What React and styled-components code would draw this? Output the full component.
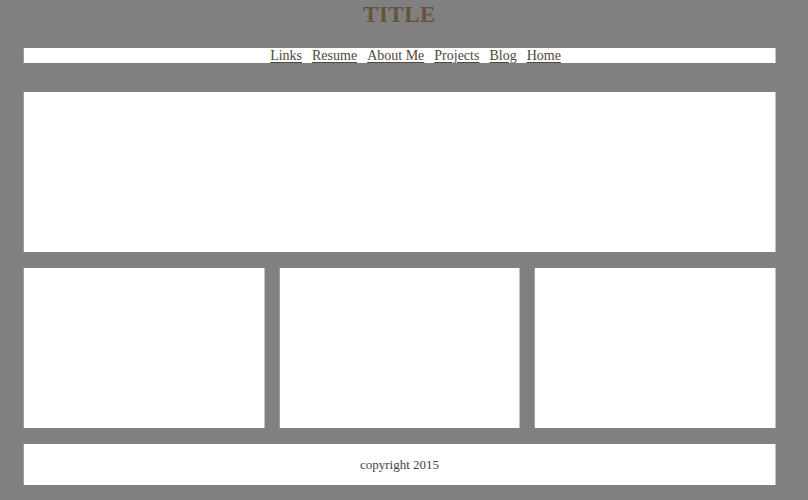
import React from "react";
import styled, { createGlobalStyle } from "styled-components";

const Global = createGlobalStyle`
  html, body { margin: 0; padding: 0; background: #808080; }
  body { font-family: "Liberation Serif", "DejaVu Serif", serif; }
`;

const Page = styled.div`
  width: 751px;
  margin-left: 24px;
  display: flex;
  flex-direction: column;
`;

const Title = styled.h1`
  margin: 0;
  height: 48px;
  padding-top: 1px;
  box-sizing: border-box;
  text-align: center;
  font-size: 23px;
  font-weight: bold;
  color: #65533f;
  line-height: 28px;
  letter-spacing: 0.5px;
`;

const Nav = styled.nav`
  background: #fff;
  box-shadow: 1px 0 0 #c4c4c4, -1px 0 0 #a0a0a0;
  height: 15px;
  margin-bottom: 29px;
  display: flex;
  justify-content: center;
  align-items: center;
  gap: 10px;
  padding-left: 32px;
`;

const NavLink = styled.a`
  font-size: 14px;
  line-height: 15px;
  color: #4f4740;
  text-decoration: underline;
  text-underline-offset: 2px;
  cursor: pointer;
`;

const Panel = styled.div`
  background: #fff;
  box-shadow: 1px 0 0 #c4c4c4, -1px 0 0 #a0a0a0;
  height: ${(p) => p.$h}px;
  margin-bottom: ${(p) => p.$mb || 0}px;
`;

const Row = styled.div`
  display: grid;
  grid-template-columns: repeat(3, 1fr);
  gap: 16px;
  margin-bottom: 16px;
`;

const Footer = styled.footer`
  background: #fff;
  box-shadow: 1px 0 0 #c4c4c4, -1px 0 0 #a0a0a0;
  height: 41px;
  display: flex;
  align-items: center;
  justify-content: center;
  font-size: 13px;
  color: #4a4038;
`;

export default function App() {
  const links = ["Links", "Resume", "About Me", "Projects", "Blog", "Home"];
  return (
    <>
      <Global />
      <Page>
        <Title>TITLE</Title>
        <Nav>
          {links.map((l) => (
            <NavLink key={l}>{l}</NavLink>
          ))}
        </Nav>
        <Panel $h={160} $mb={16} />
        <Row>
          <Panel $h={160} />
          <Panel $h={160} />
          <Panel $h={160} />
        </Row>
        <Footer>copyright 2015</Footer>
      </Page>
    </>
  );
}
